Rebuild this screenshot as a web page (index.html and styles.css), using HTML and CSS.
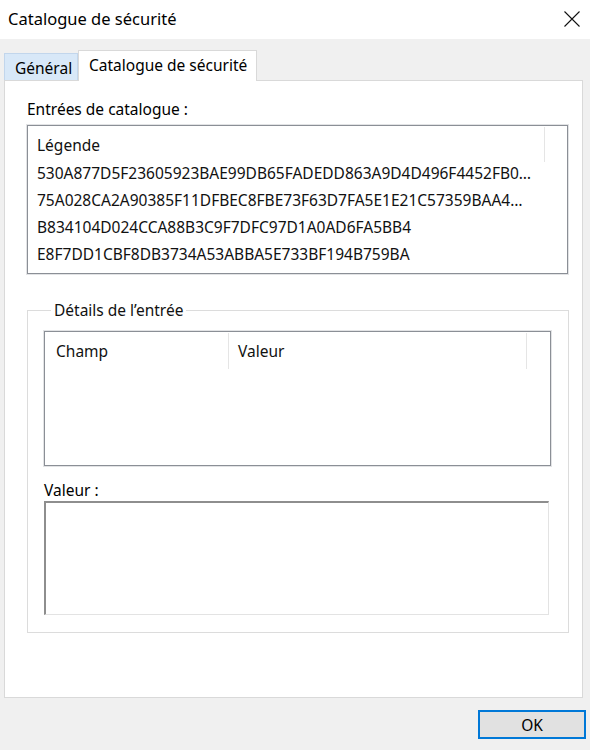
FILE: index.html
```html
<!DOCTYPE html>
<html lang="fr">
<head>
<meta charset="utf-8">
<title>Catalogue de sécurité</title>
<link rel="stylesheet" href="styles.css">
</head>
<body>
<div class="window">
  <div class="titlebar">
    <span class="title">Catalogue de sécurité</span>
    <svg class="close" width="16" height="16" viewBox="0 0 16 16"><path d="M0.5 0.5 L15.5 15.5 M15.5 0.5 L0.5 15.5" stroke="#111" stroke-width="1.1" fill="none"/></svg>
  </div>
  <div class="body">
    <div class="tabs">
      <div class="tab">Général</div>
      <div class="tab active">Catalogue de sécurité</div>
    </div>
    <div class="panel">
      <div class="label">Entrées de catalogue :</div>
      <div class="listbox">
        <div class="lhead"><span class="hcell legend-col">Légende</span></div>
        <div class="row">530A877D5F23605923BAE99DB65FADEDD863A9D4D496F4452FB0…</div>
        <div class="row">75A028CA2A90385F11DFBEC8FBE73F63D7FA5E1E21C57359BAA4…</div>
        <div class="row">B834104D024CCA88B3C9F7DFC97D1A0AD6FA5BB4</div>
        <div class="row">E8F7DD1CBF8DB3734A53ABBA5E733BF194B759BA</div>
      </div>
      <fieldset class="group">
        <legend>Détails de l’entrée</legend>
        <div class="listbox details">
          <div class="lhead">
            <span class="hcell champ">Champ</span>
            <span class="hcell valeur">Valeur</span>
          </div>
        </div>
        <div class="label small">Valeur :</div>
        <div class="textbox"></div>
      </fieldset>
    </div>
    <div class="footer">
      <button class="ok">OK</button>
    </div>
  </div>
</div>
</body>
</html>
```

FILE: styles.css
```css
* { box-sizing: border-box; }
html, body { margin: 0; padding: 0; }
body {
  font-family: "Noto Sans", "Open Sans", sans-serif;
  font-size: 15.5px;
  color: #000;
  background: #f0f0f0;
  width: 590px;
  height: 750px;
  overflow: hidden;
}
.window { width: 590px; height: 750px; display: flex; flex-direction: column; }
.titlebar {
  height: 39px;
  background: #fff;
  display: flex;
  align-items: center;
  justify-content: space-between;
  padding: 0 10px 2px 8px;
}
.title { font-size: 16.5px; color: #000; }
.body { flex: 1; display: flex; flex-direction: column; background: #f0f0f0; }
.tabs {
  display: flex;
  align-items: flex-end;
  margin: 11px 0 0 4px;
  height: 30px;
  position: relative;
  z-index: 2;
}
.tab {
  height: 27px;
  width: 74px;
  padding: 2px 0 0 10px;
  background: #d8e8f8;
  border: 1px solid #c2d6ec;
  border-bottom: none;
  display: flex;
  align-items: center;
  color: #000;
}
.tab.active {
  width: 179px;
  height: 31px;
  margin-bottom: -1px;
  background: #fff;
  border: 1px solid #d9d9d9;
  border-bottom: none;
  padding: 0 0 3px 10px;
}
.panel {
  margin: 0 7px 0 4px;
  height: 618px;
  background: #fff;
  border: 1px solid #d9d9d9;
  padding: 18px 14px 0 22px;
  display: flex;
  flex-direction: column;
}
.label { line-height: 20px; height: 26px; }
.listbox {
  width: 541px;
  height: 149px;
  border: 1px solid #8b8f96;
  box-shadow: 0 0 0 1px rgba(140,145,150,0.25);
  background: #fff;
  padding: 1px 0 0 0;
}
.lhead { display: flex; height: 33px; }
.hcell {
  display: flex;
  align-items: center;
  padding-left: 9px;
  color: #111;
  border-right: 1px solid #e5e5e5;
  height: 35px;
}
.legend-col { width: 517px; }
.row {
  height: 27px;
  line-height: 27px;
  padding-left: 9px;
  white-space: nowrap;
  overflow: hidden;
  color: #111;
}
.group {
  margin: 27px 0 0 0;
  width: 541px;
  height: 332px;
  border: 1px solid #dcdcdc;
  padding: 11px 17px 0 16px;
}
.group legend {
  margin-left: 7px;
  padding: 0 3px;
  line-height: 18px;
  color: #111;
}
.details { width: 507px; height: 135px; margin-top: 1px; }
.details .lhead { height: 36px; }
.champ { width: 184px; height: 36px; padding-left: 11px; }
.valeur { width: 298px; height: 36px; }
.label.small { margin-top: 13px; height: 22px; line-height: 22px; }
.textbox {
  width: 505px;
  height: 114px;
  background: #fff;
  border-top: 2px solid #8e8e8e;
  border-left: 2px solid #8e8e8e;
  border-right: 1px solid #e3e3e3;
  border-bottom: 1px solid #e3e3e3;
}
.footer {
  display: flex;
  justify-content: flex-end;
  padding: 12px 4px 0 0;
}
.ok {
  width: 108px;
  height: 29px;
  background: #e1e1e1;
  border: 2px solid #0078d7;
  font-family: "Noto Sans", "Open Sans", sans-serif;
  font-size: 15.5px;
  color: #000;
  padding: 0;
}
```
